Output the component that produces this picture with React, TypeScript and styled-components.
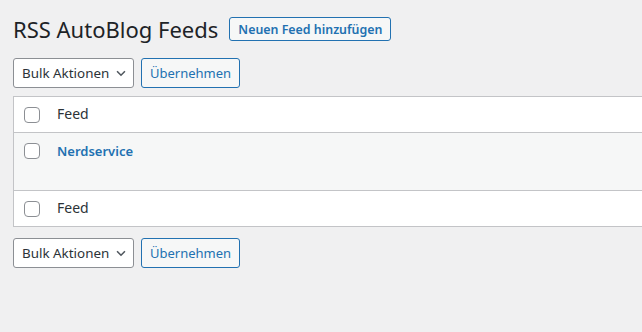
import React from 'react';
import styled, { createGlobalStyle } from 'styled-components';

const GlobalStyle = createGlobalStyle`
  html, body {
    margin: 0;
    background: #f0f0f1;
  }
  body {
    font-family: 'Noto Sans', 'Open Sans', sans-serif;
    color: #1d2327;
    font-size: 13px;
  }
`;

const Wrap = styled.div`
  padding: 14px 0 0 13px;
`;

const Header = styled.div`
  display: flex;
  align-items: center;
  gap: 11px;
  height: 30px;
`;

const Title = styled.h1`
  margin: 0;
  font-size: 22px;
  font-weight: 400;
  line-height: 30px;
  color: #1d2327;
`;

const OutlineButton = styled.button<{ bold?: boolean }>`
  font-family: inherit;
  font-size: ${(p) => (p.bold ? '12.4px' : '13px')};
  font-weight: ${(p) => (p.bold ? 600 : 400)};
  color: #2271b1;
  background: #f6f7f7;
  border: 1px solid #2271b1;
  border-radius: 3px;
  padding: 0 ${(p) => (p.bold ? 8 : 8)}px;
  height: ${(p) => (p.bold ? '24px' : '30px')};
  white-space: nowrap;
  cursor: pointer;
`;

const TableNav = styled.div<{ top?: number; bottom?: number }>`
  display: flex;
  gap: 7px;
  margin-top: ${(p) => p.top ?? 0}px;
  margin-bottom: ${(p) => p.bottom ?? 0}px;
`;

const Select = styled.div`
  display: flex;
  align-items: center;
  justify-content: space-between;
  width: 121px;
  height: 30px;
  box-sizing: border-box;
  padding: 0 5px 0 8px;
  background: #fff;
  border: 1px solid #8c8f94;
  border-radius: 3px;
  font-size: 13.4px;
  white-space: nowrap;
  color: #2c3338;
`;

const Table = styled.div`
  background: #fff;
  border: 1px solid #c3c4c7;
  border-right: none;
`;

const Row = styled.div<{ height: number; striped?: boolean; divider?: boolean }>`
  display: flex;
  align-items: flex-start;
  height: ${(p) => p.height}px;
  background: ${(p) => (p.striped ? '#f6f7f7' : '#fff')};
  border-top: ${(p) => (p.divider ? '1px solid #c3c4c7' : 'none')};
  box-sizing: border-box;
`;

const CheckCell = styled.div`
  width: 43px;
  padding: 10px 0 0 10px;
  box-sizing: border-box;
`;

const Checkbox = styled.span`
  display: block;
  width: 16px;
  height: 16px;
  box-sizing: border-box;
  border: 1px solid #8c8f94;
  border-radius: 4px;
  background: #fff;
`;

const TextCell = styled.div<{ link?: boolean }>`
  padding-top: ${(p) => (p.link ? 9 : 7)}px;
  font-size: ${(p) => (p.link ? 13 : 14)}px;
  line-height: 19px;
  font-weight: ${(p) => (p.link ? 600 : 400)};
  color: ${(p) => (p.link ? '#2271b1' : '#2c3338')};
`;

const Chevron = () => (
  <svg width="14" height="14" viewBox="0 0 16 16" fill="none">
    <path d="M3.5 6l4.5 4.5 4.5-4.5" stroke="#50575e" strokeWidth="1.8" />
  </svg>
);

const BulkActions = ({ top, bottom }: { top?: number; bottom?: number }) => (
  <TableNav top={top} bottom={bottom}>
    <Select>
      Bulk Aktionen
      <Chevron />
    </Select>
    <OutlineButton>Übernehmen</OutlineButton>
  </TableNav>
);

export default function App() {
  return (
    <>
      <GlobalStyle />
      <Wrap>
        <Header>
          <Title>RSS AutoBlog Feeds</Title>
          <OutlineButton bold>Neuen Feed hinzufügen</OutlineButton>
        </Header>
        <BulkActions top={14} bottom={8} />
        <Table>
          <Row height={35}>
            <CheckCell>
              <Checkbox />
            </CheckCell>
            <TextCell>Feed</TextCell>
          </Row>
          <Row height={58} striped divider>
            <CheckCell>
              <Checkbox />
            </CheckCell>
            <TextCell link>Nerdservice</TextCell>
          </Row>
          <Row height={36} divider>
            <CheckCell>
              <Checkbox />
            </CheckCell>
            <TextCell>Feed</TextCell>
          </Row>
        </Table>
        <BulkActions top={11} />
      </Wrap>
    </>
  );
}
